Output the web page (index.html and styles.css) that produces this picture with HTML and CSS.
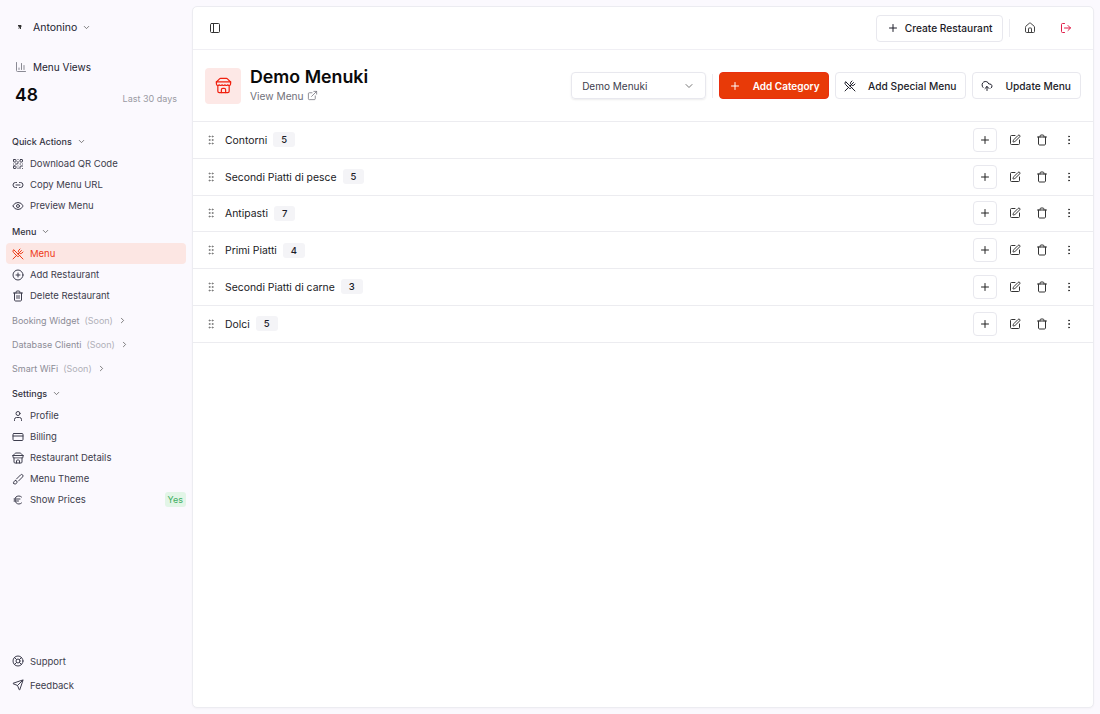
FILE: index.html
```html
<!DOCTYPE html>
<html lang="en">
<head>
    <meta charset="UTF-8">
    <meta name="viewport" content="width=device-width, initial-scale=1.0">
    <title>Demo Menuki</title>
    <link rel="stylesheet" href="styles.css">
</head>
<body>
    <svg class="sprite" aria-hidden="true">
        <symbol id="i-plus" viewBox="0 0 24 24"><path d="M5 12h14"/><path d="M12 5v14"/></symbol>
        <symbol id="i-down" viewBox="0 0 24 24"><path d="m6 9 6 6 6-6"/></symbol>
        <symbol id="i-right" viewBox="0 0 24 24"><path d="m9 18 6-6-6-6"/></symbol>
        <symbol id="i-chart" viewBox="0 0 24 24"><path d="M3 3v16a2 2 0 0 0 2 2h16"/><path d="M18 17V9"/><path d="M13 17V5"/><path d="M8 17v-3"/></symbol>
        <symbol id="i-qr" viewBox="0 0 24 24"><rect x="3" y="3" width="5" height="5" rx="1"/><rect x="16" y="3" width="5" height="5" rx="1"/><rect x="3" y="16" width="5" height="5" rx="1"/><path d="M21 16h-3a2 2 0 0 0-2 2v3"/><path d="M21 21v.01"/><path d="M12 7v3a2 2 0 0 1-2 2H7"/><path d="M3 12h.01"/><path d="M12 3h.01"/><path d="M12 16v.01"/><path d="M16 12h1"/><path d="M21 12v.01"/><path d="M12 21v-1"/></symbol>
        <symbol id="i-link" viewBox="0 0 24 24"><path d="M9 17H7A5 5 0 0 1 7 7h2"/><path d="M15 7h2a5 5 0 1 1 0 10h-2"/><path d="M8 12h8"/></symbol>
        <symbol id="i-eye" viewBox="0 0 24 24"><path d="M2.062 12.348a1 1 0 0 1 0-.696 10.75 10.75 0 0 1 19.876 0 1 1 0 0 1 0 .696 10.75 10.75 0 0 1-19.876 0"/><circle cx="12" cy="12" r="3"/></symbol>
        <symbol id="i-utensils" viewBox="0 0 24 24"><path d="m16 2-2.3 2.3a3 3 0 0 0 0 4.2l1.8 1.8a3 3 0 0 0 4.2 0L22 8"/><path d="M15 15 3.3 3.3a4.2 4.2 0 0 0 0 6l7.3 7.3c.7.7 2 .7 2.8 0L15 15Zm0 0 7 7"/><path d="m2.1 21.8 6.4-6.3"/><path d="m19 5-7 7"/></symbol>
        <symbol id="i-circle-plus" viewBox="0 0 24 24"><circle cx="12" cy="12" r="10"/><path d="M8 12h8"/><path d="M12 8v8"/></symbol>
        <symbol id="i-trash2" viewBox="0 0 24 24"><path d="M3 6h18"/><path d="M19 6v14c0 1-1 2-2 2H7c-1 0-2-1-2-2V6"/><path d="M8 6V4c0-1 1-2 2-2h4c1 0 2 1 2 2v2"/><path d="M10 11v6"/><path d="M14 11v6"/></symbol>
        <symbol id="i-trash" viewBox="0 0 24 24"><path d="M3 6h18"/><path d="M19 6v14c0 1-1 2-2 2H7c-1 0-2-1-2-2V6"/><path d="M8 6V4c0-1 1-2 2-2h4c1 0 2 1 2 2v2"/></symbol>
        <symbol id="i-user" viewBox="0 0 24 24"><path d="M19 21v-2a4 4 0 0 0-4-4H9a4 4 0 0 0-4 4v2"/><circle cx="12" cy="7" r="4"/></symbol>
        <symbol id="i-card" viewBox="0 0 24 24"><rect x="2" y="5" width="20" height="14" rx="2"/><path d="M2 10h20"/></symbol>
        <symbol id="i-store" viewBox="0 0 24 24"><path d="m2 7 4.41-4.41A2 2 0 0 1 7.83 2h8.34a2 2 0 0 1 1.42.59L22 7"/><path d="M4 12v8a2 2 0 0 0 2 2h12a2 2 0 0 0 2-2v-8"/><path d="M15 22v-4a2 2 0 0 0-2-2h-2a2 2 0 0 0-2 2v4"/><path d="M2 7h20"/><path d="M22 7v3a2 2 0 0 1-2 2 2.7 2.7 0 0 1-1.59-.63.7.7 0 0 0-.82 0A2.7 2.7 0 0 1 16 12a2.7 2.7 0 0 1-1.59-.63.7.7 0 0 0-.82 0A2.7 2.7 0 0 1 12 12a2.7 2.7 0 0 1-1.59-.63.7.7 0 0 0-.82 0A2.7 2.7 0 0 1 8 12a2.7 2.7 0 0 1-1.59-.63.7.7 0 0 0-.82 0A2.7 2.7 0 0 1 4 12a2 2 0 0 1-2-2V7"/></symbol>
        <symbol id="i-brush" viewBox="0 0 24 24"><path d="m9.06 11.9 8.07-8.06a2.85 2.85 0 1 1 4.03 4.03l-8.06 8.08"/><path d="M7.07 14.94c-1.66 0-3 1.35-3 3.02 0 1.33-2.5 1.52-2 2.02 1.08 1.1 2.49 2.02 4 2.02 2.2 0 4-1.8 4-4.04a3.01 3.01 0 0 0-3-3.02z"/></symbol>
        <symbol id="i-euro" viewBox="0 0 24 24"><path d="M4 10h12"/><path d="M4 14h9"/><path d="M19 6a7.7 7.7 0 0 0-5.2-2A7.9 7.9 0 0 0 6 12c0 4.4 3.5 8 7.8 8 2 0 3.8-.8 5.2-2"/></symbol>
        <symbol id="i-buoy" viewBox="0 0 24 24"><circle cx="12" cy="12" r="10"/><path d="m4.93 4.93 4.24 4.24"/><path d="m14.83 9.17 4.24-4.24"/><path d="m14.83 14.83 4.24 4.24"/><path d="m9.17 14.83-4.24 4.24"/><circle cx="12" cy="12" r="4"/></symbol>
        <symbol id="i-send" viewBox="0 0 24 24"><path d="M14.536 21.686a.5.5 0 0 0 .937-.024l6.5-19a.496.496 0 0 0-.635-.635l-19 6.5a.5.5 0 0 0-.024.937l7.93 3.18a2 2 0 0 1 1.112 1.11z"/><path d="m21.854 2.147-10.94 10.939"/></symbol>
        <symbol id="i-panel" viewBox="0 0 24 24"><rect x="3" y="3" width="18" height="18" rx="2"/><path d="M9 3v18"/></symbol>
        <symbol id="i-house" viewBox="0 0 24 24"><path d="M15 21v-8a1 1 0 0 0-1-1h-4a1 1 0 0 0-1 1v8"/><path d="M3 10a2 2 0 0 1 .709-1.528l7-5.999a2 2 0 0 1 2.582 0l7 5.999A2 2 0 0 1 21 10v9a2 2 0 0 1-2 2H5a2 2 0 0 1-2-2z"/></symbol>
        <symbol id="i-logout" viewBox="0 0 24 24"><path d="M9 21H5a2 2 0 0 1-2-2V5a2 2 0 0 1 2-2h4"/><path d="m16 17 5-5-5-5"/><path d="M21 12H9"/></symbol>
        <symbol id="i-external" viewBox="0 0 24 24"><path d="M15 3h6v6"/><path d="M10 14 21 3"/><path d="M18 13v6a2 2 0 0 1-2 2H5a2 2 0 0 1-2-2V8a2 2 0 0 1 2-2h6"/></symbol>
        <symbol id="i-cloud" viewBox="0 0 24 24"><path d="M12 13v8"/><path d="M4 14.899A7 7 0 1 1 15.71 8h1.79a4.5 4.5 0 0 1 2.5 8.242"/><path d="m8 17 4-4 4 4"/></symbol>
        <symbol id="i-edit" viewBox="0 0 24 24"><path d="M12 3H5a2 2 0 0 0-2 2v14a2 2 0 0 0 2 2h14a2 2 0 0 0 2-2v-7"/><path d="M18.375 2.625a1 1 0 0 1 3 3l-9.013 9.014a2 2 0 0 1-.853.505l-2.873.84a.5.5 0 0 1-.62-.62l.84-2.873a2 2 0 0 1 .506-.852z"/></symbol>
        <symbol id="i-grip" viewBox="0 0 24 24"><circle cx="9" cy="5" r="1"/><circle cx="9" cy="12" r="1"/><circle cx="9" cy="19" r="1"/><circle cx="15" cy="5" r="1"/><circle cx="15" cy="12" r="1"/><circle cx="15" cy="19" r="1"/></symbol>
        <symbol id="i-dots" viewBox="0 0 24 24"><circle cx="12" cy="5" r="1"/><circle cx="12" cy="12" r="1"/><circle cx="12" cy="19" r="1"/></symbol>
    </svg>

    <div class="app">
        <aside class="sidebar">
            <div class="account">
                <svg class="logo" viewBox="0 0 12 12"><path d="M2 2h6l2 3H8v5H6V6L4 10H3l1-5H2z"/></svg>
                <span>Antonino</span>
                <svg class="icon chev"><use href="#i-down"/></svg>
            </div>

            <div class="stats">
                <div class="stats-title"><svg class="icon stats-icon"><use href="#i-chart"/></svg><span>Menu Views</span></div>
                <div class="stats-line"><strong>48</strong><span>Last 30 days</span></div>
            </div>

            <div class="group-label first">Quick Actions <svg class="icon chev"><use href="#i-down"/></svg></div>
            <a class="nav-item"><svg class="icon"><use href="#i-qr"/></svg>Download QR Code</a>
            <a class="nav-item"><svg class="icon"><use href="#i-link"/></svg>Copy Menu URL</a>
            <a class="nav-item"><svg class="icon"><use href="#i-eye"/></svg>Preview Menu</a>

            <div class="group-label">Menu <svg class="icon chev"><use href="#i-down"/></svg></div>
            <a class="nav-item active"><svg class="icon"><use href="#i-utensils"/></svg>Menu</a>
            <a class="nav-item"><svg class="icon"><use href="#i-circle-plus"/></svg>Add Restaurant</a>
            <a class="nav-item"><svg class="icon"><use href="#i-trash2"/></svg>Delete Restaurant</a>

            <div class="soon-list">
                <div class="soon">Booking Widget <em>(Soon)</em> <svg class="icon chev"><use href="#i-right"/></svg></div>
                <div class="soon">Database Clienti <em>(Soon)</em> <svg class="icon chev"><use href="#i-right"/></svg></div>
                <div class="soon">Smart WiFi <em>(Soon)</em> <svg class="icon chev"><use href="#i-right"/></svg></div>
            </div>

            <div class="group-label settings">Settings <svg class="icon chev"><use href="#i-down"/></svg></div>
            <a class="nav-item"><svg class="icon"><use href="#i-user"/></svg>Profile</a>
            <a class="nav-item"><svg class="icon"><use href="#i-card"/></svg>Billing</a>
            <a class="nav-item"><svg class="icon"><use href="#i-store"/></svg>Restaurant Details</a>
            <a class="nav-item"><svg class="icon"><use href="#i-brush"/></svg>Menu Theme</a>
            <a class="nav-item"><svg class="icon"><use href="#i-euro"/></svg>Show Prices<span class="yes">Yes</span></a>

            <div class="sidebar-foot">
                <a class="foot-item"><svg class="icon"><use href="#i-buoy"/></svg>Support</a>
                <a class="foot-item"><svg class="icon"><use href="#i-send"/></svg>Feedback</a>
            </div>
        </aside>

        <main class="panel">
            <div class="topbar">
                <svg class="icon panel-toggle"><use href="#i-panel"/></svg>
                <div class="topbar-right">
                    <button class="btn create"><svg class="icon"><use href="#i-plus"/></svg>Create Restaurant</button>
                    <span class="vline"></span>
                    <svg class="icon top-icon"><use href="#i-house"/></svg>
                    <svg class="icon top-icon logout"><use href="#i-logout"/></svg>
                </div>
            </div>

            <div class="head">
                <div class="store-badge"><svg class="icon"><use href="#i-store"/></svg></div>
                <div class="head-title">
                    <h1>Demo Menuki</h1>
                    <a class="view-link">View Menu <svg class="icon"><use href="#i-external"/></svg></a>
                </div>
                <div class="head-actions">
                    <div class="select">Demo Menuki <svg class="icon"><use href="#i-down"/></svg></div>
                    <span class="vline tall"></span>
                    <button class="btn primary"><svg class="icon"><use href="#i-plus"/></svg>Add Category</button>
                    <button class="btn"><svg class="icon"><use href="#i-utensils"/></svg>Add Special Menu</button>
                    <button class="btn"><svg class="icon"><use href="#i-cloud"/></svg>Update Menu</button>
                </div>
            </div>

            <div class="rows">
                <div class="row">
                    <svg class="icon grip"><use href="#i-grip"/></svg><span class="row-name">Contorni</span><span class="count">5</span>
                    <div class="row-actions"><button class="add"><svg class="icon"><use href="#i-plus"/></svg></button><svg class="icon"><use href="#i-edit"/></svg><svg class="icon"><use href="#i-trash"/></svg><svg class="icon"><use href="#i-dots"/></svg></div>
                </div>
                <div class="row">
                    <svg class="icon grip"><use href="#i-grip"/></svg><span class="row-name">Secondi Piatti di pesce</span><span class="count">5</span>
                    <div class="row-actions"><button class="add"><svg class="icon"><use href="#i-plus"/></svg></button><svg class="icon"><use href="#i-edit"/></svg><svg class="icon"><use href="#i-trash"/></svg><svg class="icon"><use href="#i-dots"/></svg></div>
                </div>
                <div class="row">
                    <svg class="icon grip"><use href="#i-grip"/></svg><span class="row-name">Antipasti</span><span class="count">7</span>
                    <div class="row-actions"><button class="add"><svg class="icon"><use href="#i-plus"/></svg></button><svg class="icon"><use href="#i-edit"/></svg><svg class="icon"><use href="#i-trash"/></svg><svg class="icon"><use href="#i-dots"/></svg></div>
                </div>
                <div class="row">
                    <svg class="icon grip"><use href="#i-grip"/></svg><span class="row-name">Primi Piatti</span><span class="count">4</span>
                    <div class="row-actions"><button class="add"><svg class="icon"><use href="#i-plus"/></svg></button><svg class="icon"><use href="#i-edit"/></svg><svg class="icon"><use href="#i-trash"/></svg><svg class="icon"><use href="#i-dots"/></svg></div>
                </div>
                <div class="row">
                    <svg class="icon grip"><use href="#i-grip"/></svg><span class="row-name">Secondi Piatti di carne</span><span class="count">3</span>
                    <div class="row-actions"><button class="add"><svg class="icon"><use href="#i-plus"/></svg></button><svg class="icon"><use href="#i-edit"/></svg><svg class="icon"><use href="#i-trash"/></svg><svg class="icon"><use href="#i-dots"/></svg></div>
                </div>
                <div class="row">
                    <svg class="icon grip"><use href="#i-grip"/></svg><span class="row-name">Dolci</span><span class="count">5</span>
                    <div class="row-actions"><button class="add"><svg class="icon"><use href="#i-plus"/></svg></button><svg class="icon"><use href="#i-edit"/></svg><svg class="icon"><use href="#i-trash"/></svg><svg class="icon"><use href="#i-dots"/></svg></div>
                </div>
            </div>
        </main>
    </div>
</body>
</html>
```

FILE: styles.css
```css
* {
    box-sizing: border-box;
}
html, body {
    height: 100%;
}
body {
    margin: 0;
    font-family: Inter, "Liberation Sans", sans-serif;
    font-size: 9.5px;
    color: #1c1c28;
    background-color: #fbf9fe;
    overflow: hidden;
}
.sprite {
    display: none;
}
.icon {
    width: 12px;
    height: 12px;
    flex: none;
    fill: none;
    stroke: currentColor;
    stroke-width: 2;
    stroke-linecap: round;
    stroke-linejoin: round;
}
.app {
    display: flex;
    height: 714px;
}

/* sidebar */
.sidebar {
    width: 192px;
    flex: none;
    display: flex;
    flex-direction: column;
    padding: 0 6px;
}
.account {
    display: flex;
    align-items: center;
    height: 20px;
    margin-top: 17px;
    padding-left: 11px;
    font-size: 10.5px;
    color: #222230;
}
.logo {
    width: 6px;
    height: 6px;
    margin-right: 10px;
    fill: #333;
}
.chev {
    width: 9px;
    height: 9px;
    margin-left: 5px;
    color: #555;
}
.stats {
    padding: 0 9px;
    margin-top: 20px;
}
.stats-title {
    display: flex;
    align-items: center;
    gap: 6px;
    height: 20px;
    font-size: 10px;
    color: #222230;
}
.stats-icon {
    color: #8a8a94;
}
.stats-line {
    display: flex;
    justify-content: space-between;
    align-items: flex-end;
    margin-top: 6px;
    height: 24px;
    font-size: 9px;
    color: #9a9aa3;
}
.stats-line strong {
    font-size: 17.5px;
    font-weight: 600;
    color: #0a0a0a;
    line-height: 24px;
}
.stats-line span {
    padding-bottom: 3px;
}
.group-label {
    display: flex;
    align-items: center;
    height: 21px;
    margin-top: 5px;
    margin-bottom: 1px;
    padding-left: 6px;
    font-size: 9px;
    font-weight: 500;
    color: #33333f;
}
.group-label.first {
    margin-top: 24px;
}
.group-label.settings {
    margin-top: 3px;
}
.nav-item {
    display: flex;
    align-items: center;
    gap: 6px;
    height: 21px;
    padding: 0 6px;
    border-radius: 4px;
    color: #3d3d4d;
}
.nav-item.active {
    background-color: #fce6e3;
    color: #ee3b17;
}
.yes {
    margin-left: auto;
    margin-right: -6px;
    padding: 2px 3px;
    border-radius: 3px;
    font-size: 9px;
    color: #3fae63;
    background-color: #e2f5e7;
}
.soon-list {
    margin-top: 2px;
}
.soon {
    display: flex;
    align-items: center;
    gap: 4px;
    height: 24px;
    padding-left: 6px;
    font-size: 9px;
    color: #8c8c96;
}
.soon em {
    margin-left: 1px;
    font-style: normal;
    color: #b0b0b8;
}
.soon .chev {
    margin-left: 1px;
}
.sidebar-foot {
    margin-top: auto;
    padding-bottom: 17px;
}
.foot-item {
    display: flex;
    align-items: center;
    gap: 6px;
    height: 24px;
    padding: 0 6px;
    color: #3d3d4d;
}

/* main panel */
.panel {
    flex: none;
    width: 902px;
    margin: 6px 0;
    background: white;
    border: 1px solid #ececf1;
    border-radius: 5px;
    box-shadow: 0 1px 2px rgba(0,0,0,0.03);
}
.topbar {
    display: flex;
    align-items: center;
    justify-content: space-between;
    height: 43px;
    padding: 0 16px;
    border-bottom: 1px solid #f0eff4;
}
.panel-toggle {
    color: #333;
}
.topbar-right {
    display: flex;
    align-items: center;
}
.top-icon {
    margin-left: 14px;
    color: #444;
}
.top-icon.logout {
    margin-left: 24px;
    margin-right: 5px;
    color: #e11d48;
}
.vline {
    width: 1px;
    height: 18px;
    margin-left: 6px;
    background-color: #ececf1;
}
.vline.tall {
    height: 24px;
    margin: 0;
}
.btn {
    display: inline-flex;
    align-items: center;
    height: 27px;
    padding: 0 9px 0 8px;
    gap: 12px;
    font: 500 10.2px Inter, "Liberation Sans", sans-serif;
    color: #1c1c28;
    background: white;
    border: 1px solid #e8e8ee;
    border-radius: 4px;
}
.btn.create {
    gap: 6px;
    padding: 0 9.5px;
}
.btn.primary {
    padding: 0 8.5px;
    font-size: 10px;
    font-weight: 600;
    color: white;
    background-color: #e83a08;
    border-color: #ea2f10;
}
.head {
    display: flex;
    align-items: center;
    height: 72px;
    padding: 0 12px;
    border-bottom: 1px solid #ececf0;
}
.store-badge {
    display: flex;
    align-items: center;
    justify-content: center;
    width: 36px;
    height: 36px;
    border-radius: 4px;
    color: #f0200f;
    background-color: #fde8e6;
}
.store-badge .icon {
    width: 17px;
    height: 17px;
    stroke-width: 1.7;
}
.head-title {
    margin-left: 9px;
    padding-bottom: 4px;
}
h1 {
    margin: 0;
    font-size: 17.8px;
    font-weight: 600;
    line-height: 22px;
    color: #0a0a0a;
}
.view-link {
    display: flex;
    align-items: center;
    gap: 3px;
    margin-top: 2px;
    color: #71717a;
    font-size: 10.2px;
}
.view-link .icon {
    width: 11px;
    height: 11px;
    stroke-width: 1.7;
}
.head-actions {
    display: flex;
    align-items: center;
    gap: 6px;
    margin-left: auto;
}
.select {
    display: flex;
    align-items: center;
    justify-content: space-between;
    width: 135px;
    height: 27px;
    padding: 0 10px;
    font-size: 10px;
    color: #3d3d4d;
    border: 1px solid #e8e8ee;
    border-radius: 4px;
    box-shadow: 0 1px 2px rgba(0,0,0,0.08);
}
.select .icon {
    color: #777;
}
.row {
    display: flex;
    align-items: center;
    height: 36.75px;
    padding: 0 18px 0 12px;
    border-bottom: 1px solid #ececf0;
}
.grip {
    color: #777;
    margin-right: 8px;
}
.row-name {
    padding-top: 1px;
    font-size: 10.4px;
    color: #1a1a24;
}
.count {
    margin-left: 6px;
    padding: 2px 8px;
    font-size: 9.5px;
    font-weight: 500;
    background-color: #f4f4f7;
    border-radius: 3px;
}
.row-actions {
    display: flex;
    align-items: center;
    gap: 15px;
    margin-left: auto;
    color: #333;
}
.add {
    display: flex;
    align-items: center;
    justify-content: center;
    width: 24px;
    height: 24px;
    padding: 0;
    margin-right: -3px;
    color: #222;
    background: white;
    border: 1px solid #e8e8ee;
    border-radius: 4px;
}
```
